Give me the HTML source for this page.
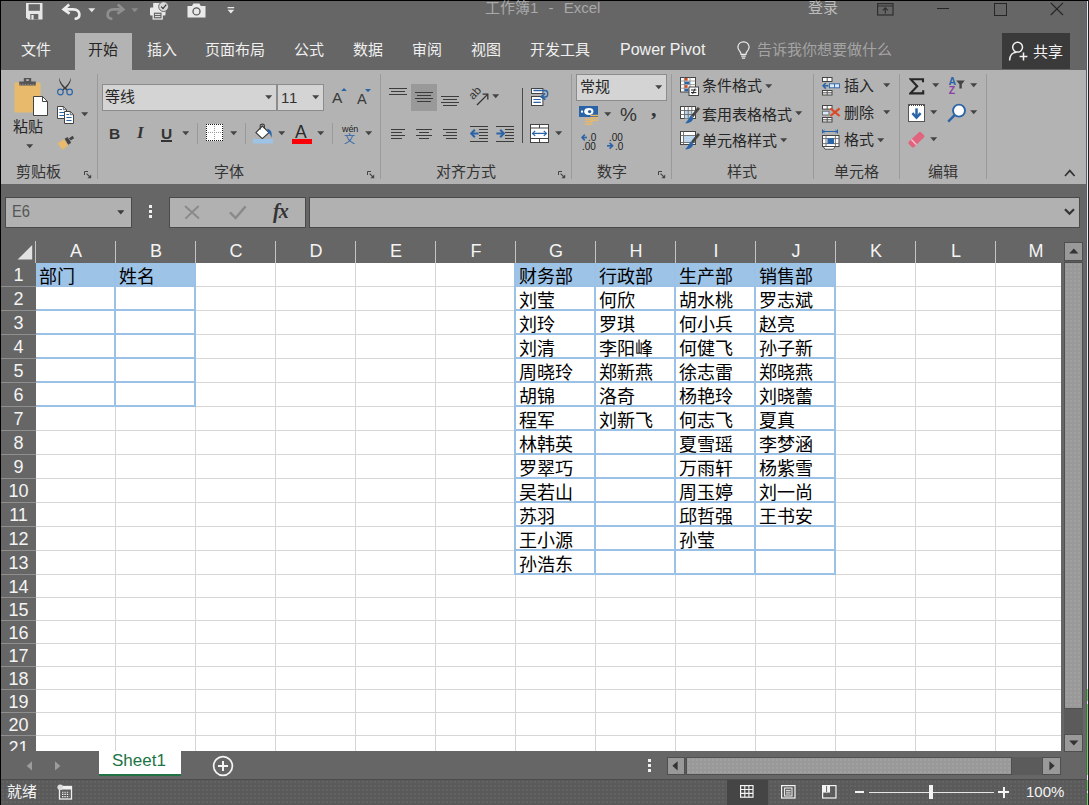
<!DOCTYPE html>
<html lang="zh-CN">
<head>
<meta charset="utf-8">
<title>工作簿1 - Excel</title>
<style>
html,body{margin:0;padding:0;}
body{width:1089px;height:805px;overflow:hidden;background:#666666;font-family:"Liberation Sans",sans-serif;}
#win{position:absolute;left:0;top:0;width:1089px;height:805px;overflow:hidden;background:#666666;}
.abs{position:absolute;}
.t{position:absolute;white-space:nowrap;font-size:15px;line-height:20px;color:#262626;}
.w{color:#f0f0f0;}
/* frame */
#bt{position:absolute;left:0;top:0;width:1089px;height:1px;background:#000;}
#bl{position:absolute;left:0;top:0;width:1px;height:805px;background:#000;}
#br{position:absolute;left:1088px;top:0;width:1px;height:805px;background:#222;}
#br2{position:absolute;left:1087px;top:1px;width:1px;height:804px;background:#e6ebf8;}
#br3{position:absolute;left:1086px;top:1px;width:1px;height:804px;background:#5c5c5c;}
/* ribbon */
#ribbon{position:absolute;left:1px;top:70px;width:1085px;height:114px;background:#b3b3b3;}
.gsep{position:absolute;top:79px;width:1px;height:104px;background:#999999;}
.glabel{position:absolute;top:162px;font-size:15px;line-height:20px;color:#333;white-space:nowrap;}
/* grid */
#grid{position:absolute;left:1px;top:239px;width:1060px;height:512px;overflow:hidden;}
#colhdr{position:absolute;left:0;top:0;width:1060px;height:24px;background:#666666;}
.ch{position:absolute;top:0;width:80px;height:24px;line-height:25px;text-align:center;color:#f4f4f4;font-size:18px;}
.chsep{position:absolute;top:2px;width:1px;height:22px;background:#c4c4c4;}
#sheet{position:absolute;left:35px;top:24px;width:1025px;height:488px;background:#ffffff;overflow:hidden;}
.vl{position:absolute;top:0;width:1px;height:488px;background:#d6d6d6;}
.hl{position:absolute;left:0;height:1px;width:1025px;background:#d6d6d6;}
.cell{position:absolute;box-sizing:border-box;width:82px;height:26px;border:2px solid #9bc2e6;font-size:18px;line-height:24px;padding-left:3px;padding-top:2px;color:#000;white-space:nowrap;overflow:hidden;font-weight:300;}
.cell.hd{background:#9dc3e6;}
#rowhdr{position:absolute;left:0;top:24px;width:35px;height:488px;background:#666666;}
.rh{position:absolute;left:0;width:35px;height:24px;box-sizing:border-box;border-bottom:1px solid #8f8f8f;line-height:25px;font-size:18px;color:#f4f4f4;text-align:center;}
.tab{top:40px;font-size:15px;line-height:20px;}
.box{box-sizing:border-box;background:#d4d4d4;border:1px solid #8c8c8c;}
.fbox{box-sizing:border-box;background:#b1b1b1;border:1px solid #4a4a4a;}
.sbtn{box-sizing:border-box;background:#999999;border:1px solid #4f4f4f;}
.dots{background-image:radial-gradient(circle,#a8a8a8 0.6px,transparent 0.8px);background-size:4px 4px;}
.dots2{background-color:#5a5a5a;background-image:radial-gradient(circle,#6e6e6e 0.6px,transparent 0.8px);background-size:4px 4px;}

</style>
</head>
<body>
<div id="win">
<div id="bt"></div><div id="bl"></div><div id="br3"></div><div id="br2"></div><div id="br"></div>
<!-- quick access toolbar -->
<svg class="abs" style="left:26px;top:3px" width="17" height="17" viewBox="0 0 17 17"><path d="M0 0H16.5V16.5H2.2L0 14.3Z" fill="#e6e6e6"/><rect x="2.6" y="1.2" width="11.3" height="6.6" fill="#666"/><rect x="4.3" y="11" width="8" height="5.5" fill="#666"/><rect x="5.4" y="12" width="2.2" height="4.5" fill="#e6e6e6"/></svg>
<svg class="abs" style="left:61px;top:3px" width="21" height="17" viewBox="0 0 21 17"><path d="M8.2 1.6 L2.6 6.4 L8.6 10.6" fill="none" stroke="#ededed" stroke-width="2.6" stroke-linejoin="miter"/><path d="M3.4 6.4 H12.2 C16.6 6.4 18.4 9 18.4 11.6 C18.4 14.2 16.6 15.8 13.6 15.8" fill="none" stroke="#ededed" stroke-width="2.6"/></svg>
<svg class="abs" style="left:88px;top:8px" width="8" height="5" viewBox="0 0 8 5"><path d="M0.3 0.3H7.3L3.8 4.2Z" fill="#e4e4e4"/></svg>
<svg class="abs" style="left:105px;top:3px" width="21" height="17" viewBox="0 0 21 17"><g transform="translate(21,0) scale(-1,1)"><path d="M8.2 1.6 L2.6 6.4 L8.6 10.6" fill="none" stroke="#8f8f8f" stroke-width="2.6"/><path d="M3.4 6.4 H12.2 C16.6 6.4 18.4 9 18.4 11.6 C18.4 14.2 16.6 15.8 13.6 15.8" fill="none" stroke="#8f8f8f" stroke-width="2.6"/></g></svg>
<svg class="abs" style="left:131px;top:8px" width="8" height="5" viewBox="0 0 8 5"><path d="M0.3 0.3H7.3L3.8 4.2Z" fill="#8a8a8a"/></svg>
<svg class="abs" style="left:149px;top:1px" width="21" height="19" viewBox="0 0 21 19"><rect x="1" y="6.5" width="15.5" height="8" rx="1" fill="#e9e9e9"/><rect x="4.2" y="2" width="8" height="5" fill="#e9e9e9"/><rect x="4.2" y="11" width="9" height="7" fill="#666" stroke="#e9e9e9" stroke-width="1.3"/><path d="M6 13.4H11.4M6 15.6H11.4" stroke="#e9e9e9" stroke-width="1"/><circle cx="14.6" cy="5.6" r="4.9" fill="#d9d9d9" stroke="#666" stroke-width="1"/><path d="M12.2 5.6L14 7.6L17.2 3.6" fill="none" stroke="#3c3c3c" stroke-width="1.3"/></svg>
<svg class="abs" style="left:187px;top:3px" width="19" height="15" viewBox="0 0 19 15"><path d="M0.5 3H5L6.4 0.6H12.4L13.8 3H18.5V14.5H0.5Z" fill="#e9e9e9"/><circle cx="9.5" cy="8.4" r="3.5" fill="#e9e9e9" stroke="#555" stroke-width="1.3"/></svg>
<svg class="abs" style="left:227px;top:7px" width="8" height="7" viewBox="0 0 8 7"><rect x="0.6" y="0" width="6.6" height="1.3" fill="#e9e9e9"/><path d="M0.6 2.8H7.2L3.9 6.4Z" fill="#e9e9e9"/></svg>
<div class="t" style="left:485px;top:-2px;color:#a9a9a9;font-size:15px;word-spacing:6px;">工作簿1 - Excel</div>
<div class="t" style="left:808px;top:-2px;color:#bcbcbc;">登录</div>
<!-- window controls -->
<svg class="abs" style="left:877px;top:3px" width="17" height="13" viewBox="0 0 17 13"><rect x="0.6" y="0.6" width="15.4" height="11.4" fill="none" stroke="#2e2e2e" stroke-width="1.2"/><path d="M0.6 3H16" stroke="#2e2e2e" stroke-width="1"/><path d="M8.3 10.5V5M5.8 7.4L8.3 4.9L10.8 7.4" fill="none" stroke="#2e2e2e" stroke-width="1.1"/></svg>
<div class="abs" style="left:937px;top:8px;width:12px;height:1px;background:#262626"></div>
<div class="abs" style="left:994px;top:3px;width:11px;height:11px;border:1px solid #262626;box-sizing:content-box"></div>
<svg class="abs" style="left:1050px;top:2px" width="14" height="14" viewBox="0 0 14 14"><path d="M0.8 0.8L13 13M13 0.8L0.8 13" stroke="#262626" stroke-width="1.2"/></svg>
<!-- ribbon tabs -->
<div class="abs" style="left:75px;top:33px;width:57px;height:38px;background:#b3b3b3"></div>
<div class="t tab w" style="left:21px">文件</div>
<div class="t tab" style="left:88px;color:#262626">开始</div>
<div class="t tab w" style="left:147px">插入</div>
<div class="t tab w" style="left:205px">页面布局</div>
<div class="t tab w" style="left:294px">公式</div>
<div class="t tab w" style="left:353px">数据</div>
<div class="t tab w" style="left:412px">审阅</div>
<div class="t tab w" style="left:471px">视图</div>
<div class="t tab w" style="left:530px">开发工具</div>
<div class="t tab w" style="left:620px;font-size:16px;">Power Pivot</div>
<svg class="abs" style="left:737px;top:41px" width="13" height="19" viewBox="0 0 13 19"><path d="M6.5 0.8C3.2 0.8 0.9 3.2 0.9 6.2C0.9 8.4 2.2 9.6 3.2 10.8C3.8 11.6 4 12.4 4 13.4H9C9 12.4 9.2 11.6 9.8 10.8C10.8 9.6 12.1 8.4 12.1 6.2C12.1 3.2 9.8 0.8 6.5 0.8Z" fill="none" stroke="#ededed" stroke-width="1.2"/><path d="M4.2 15.2H8.8M4.8 17.2H8.2" stroke="#ededed" stroke-width="1.2"/></svg>
<div class="t tab" style="left:757px;color:#a4a4a4">告诉我你想要做什么</div>
<div class="abs" style="left:1002px;top:33px;width:68px;height:36px;background:#3a3a3a"></div>
<svg class="abs" style="left:1008px;top:41px" width="21" height="21" viewBox="0 0 21 21"><circle cx="9.6" cy="6.2" r="4.9" fill="none" stroke="#f2f2f2" stroke-width="1.5"/><path d="M1.6 19.6C1.6 14.6 4.4 11.4 8.6 11.2" fill="none" stroke="#f2f2f2" stroke-width="1.5"/><path d="M11.6 15.4H19.4M15.5 11.4V19.4" stroke="#f2f2f2" stroke-width="1.5"/></svg>
<div class="t tab" style="left:1033px;color:#f4f4f4;top:42px">共享</div>
<div id="ribbon"></div>
<svg class="abs" style="left:14px;top:77px" width="35" height="40" viewBox="0 0 35 40"><rect x="0.5" y="5.5" width="26" height="30" fill="#e8bb6c"/><path d="M5.2 8.6V4.4H9.8V1H17.2V4.4H21.8V8.6Z" fill="#555"/><path d="M5.6 7.4H21.6" stroke="#8e8e8e" stroke-width="1" stroke-dasharray="1.3 1.3"/><rect x="12.2" y="2.2" width="2.6" height="1.8" fill="#b3b3b3"/><path d="M19.5 19.5H28.5L33.5 24.5V38.5H19.5Z" fill="#fff" stroke="#444" stroke-width="1"/><path d="M28.5 19.5V24.5H33.5" fill="none" stroke="#444" stroke-width="1"/></svg>
<div class="t" style="left:13px;top:117px;">粘贴</div>
<svg class="abs" style="left:26.1px;top:144.0px" width="8" height="5" viewBox="0 0 8 5"><path d="M0.2 0.3H7.2L3.7 4.2Z" fill="#444"/></svg>
<svg class="abs" style="left:56px;top:77px" width="18" height="19" viewBox="0 0 18 19"><path d="M3.2 0.6C3.8 4.4 6.6 8.6 11.8 12.6L10.6 13.4C6.2 10.2 2.6 5.6 3.2 0.6Z" fill="#3c3c3c"/><path d="M14.8 0.6C14.2 4.4 11.4 8.6 6.2 12.6L7.4 13.4C11.8 10.2 15.4 5.6 14.8 0.6Z" fill="#3c3c3c"/><circle cx="4.4" cy="15" r="2.8" fill="none" stroke="#2b64a6" stroke-width="1.2"/><circle cx="13.6" cy="15" r="2.8" fill="none" stroke="#2b64a6" stroke-width="1.2"/></svg>
<svg class="abs" style="left:56px;top:106px" width="19" height="19" viewBox="0 0 19 19"><path d="M1.5 0.5H7.3L10.5 3.7V12.5H1.5Z" fill="#fff" stroke="#444" stroke-width="1"/><path d="M7.3 0.5V3.7H10.5" fill="none" stroke="#444" stroke-width="0.8"/><path d="M3.4 3.5H6M3.4 6.5H8.4M3.4 9.5H8.4" stroke="#2b64a6" stroke-width="1"/><path d="M8.5 5.5H14.3L17.5 8.7V17.5H8.5Z" fill="#fff" stroke="#444" stroke-width="1"/><path d="M14.3 5.5V8.7H17.5" fill="none" stroke="#444" stroke-width="0.8"/><path d="M10.4 8.5H13M10.4 11.5H15.6M10.4 14.5H15.6" stroke="#2b64a6" stroke-width="1"/></svg>
<svg class="abs" style="left:81.1px;top:112.0px" width="8" height="5" viewBox="0 0 8 5"><path d="M0.2 0.3H7.2L3.7 4.2Z" fill="#444"/></svg>
<svg class="abs" style="left:57px;top:135px" width="18" height="16" viewBox="0 0 18 16"><path d="M0.5 8.2L7.2 4.2L11 10.4L5.6 14.8Z" fill="#e8bb6c"/><path d="M7.6 3.8L10.6 2L14.2 7.8L11.2 9.8Z" fill="#444"/><path d="M12 3.2L15.6 0.8L17.2 3.2L13.6 5.6Z" fill="#444"/></svg>
<div class="glabel" style="left:16px">剪贴板</div>
<svg class="abs" style="left:84px;top:171px" width="8" height="8" viewBox="0 0 8 8"><path d="M0.5 4V0.5H4" fill="none" stroke="#444" stroke-width="1"/><path d="M2.6 2.6L6.6 6.6" stroke="#444" stroke-width="1.1"/><path d="M7.2 3.4V7.2H3.4Z" fill="#444"/></svg>
<div class="abs" style="left:97px;top:74px;width:1px;height:105px;background:#9a9a9a"></div>
<div class="abs box" style="left:102px;top:84px;width:175px;height:27px"></div>
<div class="t" style="left:105px;top:87px;">等线</div>
<svg class="abs" style="left:265.3px;top:94.6px" width="8" height="5" viewBox="0 0 8 5"><path d="M0.2 0.3H7.2L3.7 4.2Z" fill="#444"/></svg>
<div class="abs box" style="left:277px;top:84px;width:47px;height:27px"></div>
<div class="t" style="left:281px;top:88px;font-size:15px;letter-spacing:0.8px;color:#333">11</div>
<svg class="abs" style="left:312.3px;top:94.6px" width="8" height="5" viewBox="0 0 8 5"><path d="M0.2 0.3H7.2L3.7 4.2Z" fill="#444"/></svg>
<div class="t" style="left:332px;top:88px;font-size:15.5px;line-height:20px;color:#3a3a3a">A</div>
<svg class="abs" style="left:340.5px;top:88px" width="6" height="3.2" viewBox="0 0 6 3.2"><path d="M0 3.2H6L3 0Z" fill="#2b64a6"/></svg>
<div class="t" style="left:357px;top:89px;font-size:14.5px;line-height:20px;color:#3a3a3a">A</div>
<svg class="abs" style="left:365.3px;top:89px" width="6" height="3.2" viewBox="0 0 6 3.2"><path d="M0 0H6L3 3.2Z" fill="#2b64a6"/></svg>
<div class="t" style="left:109px;top:124px;font-weight:bold;font-size:15.5px;color:#333">B</div>
<div class="t" style="left:137px;top:123px;font-weight:bold;font-style:italic;font-size:17px;color:#333;font-family:'Liberation Serif',serif">I</div>
<div class="t" style="left:161px;top:124px;font-size:15.5px;font-weight:bold;color:#333">U</div>
<div class="abs" style="left:161px;top:140px;width:11px;height:1.5px;background:#333"></div>
<svg class="abs" style="left:182.2px;top:131.1px" width="8" height="5" viewBox="0 0 8 5"><path d="M0.2 0.3H7.2L3.7 4.2Z" fill="#444"/></svg>
<div class="abs" style="left:197px;top:123px;width:1px;height:21px;background:#9a9a9a"></div>
<svg class="abs" style="left:206px;top:124px" width="18" height="18" viewBox="0 0 18 18"><g shape-rendering="crispEdges"><rect x="0" y="0" width="17" height="17" fill="#fff"/><path d="M0 8.5H17M8.5 0V17" fill="none" stroke="#9a9a9a" stroke-width="1" stroke-dasharray="1 1"/><path d="M0 0.5H17M0 16.5H17M0.5 0V17M16.5 0V17" fill="none" stroke="#1a1a1a" stroke-width="1" stroke-dasharray="1 1"/></g></svg>
<svg class="abs" style="left:230.0px;top:131.1px" width="8" height="5" viewBox="0 0 8 5"><path d="M0.2 0.3H7.2L3.7 4.2Z" fill="#444"/></svg>
<div class="abs" style="left:245px;top:123px;width:1px;height:21px;background:#9a9a9a"></div>
<svg class="abs" style="left:253px;top:123px" width="21" height="21" viewBox="0 0 21 21"><path d="M2.9 9.6L9.3 3L16 9.6L9.3 15.6Z" fill="#fff" stroke="#3c3c3c" stroke-width="1.2" stroke-linejoin="round"/><path d="M7.2 6.4V2.6C7.2 0.6 11.4 0.6 11.4 2.6V5.2" fill="none" stroke="#3c3c3c" stroke-width="1.1"/><path d="M14.2 5.8C17.8 6.4 19.4 9.4 18.6 14.8C17.8 12 16.8 10.8 15 9.6Z" fill="#2b64a6"/><rect x="0" y="16" width="20" height="4.5" fill="#9dc3e6"/></svg>
<svg class="abs" style="left:278.1px;top:131.1px" width="8" height="5" viewBox="0 0 8 5"><path d="M0.2 0.3H7.2L3.7 4.2Z" fill="#444"/></svg>
<div class="t" style="left:295px;top:122px;font-size:17.5px;color:#2b2b2b;">A</div>
<div class="abs" style="left:292px;top:139px;width:20px;height:5px;background:#fb0007"></div>
<svg class="abs" style="left:317.1px;top:131.1px" width="8" height="5" viewBox="0 0 8 5"><path d="M0.2 0.3H7.2L3.7 4.2Z" fill="#444"/></svg>
<div class="abs" style="left:332px;top:123px;width:1px;height:21px;background:#9a9a9a"></div>
<div class="t" style="left:342px;top:123px;font-size:9px;line-height:12px;color:#222;letter-spacing:-0.1px">wén</div>
<div class="t" style="left:344px;top:133px;font-size:11px;line-height:13px;color:#2b64a6">文</div>
<svg class="abs" style="left:365.3px;top:131.1px" width="8" height="5" viewBox="0 0 8 5"><path d="M0.2 0.3H7.2L3.7 4.2Z" fill="#444"/></svg>
<div class="glabel" style="left:214px">字体</div>
<svg class="abs" style="left:367px;top:171px" width="8" height="8" viewBox="0 0 8 8"><path d="M0.5 4V0.5H4" fill="none" stroke="#444" stroke-width="1"/><path d="M2.6 2.6L6.6 6.6" stroke="#444" stroke-width="1.1"/><path d="M7.2 3.4V7.2H3.4Z" fill="#444"/></svg>
<div class="abs" style="left:380px;top:74px;width:1px;height:105px;background:#9a9a9a"></div>
<div class="abs" style="left:389px;top:88px;width:18px;height:1px;background:#3c3c3c"></div>
<div class="abs" style="left:391px;top:91px;width:14px;height:1px;background:#3c3c3c"></div>
<div class="abs" style="left:389px;top:94px;width:18px;height:1px;background:#3c3c3c"></div>
<div class="abs" style="left:411px;top:84px;width:26px;height:27px;background:#999"></div>
<div class="abs" style="left:415px;top:92px;width:18px;height:1px;background:#3c3c3c"></div>
<div class="abs" style="left:417px;top:95px;width:14px;height:1px;background:#3c3c3c"></div>
<div class="abs" style="left:415px;top:98px;width:18px;height:1px;background:#3c3c3c"></div>
<div class="abs" style="left:417px;top:101px;width:14px;height:1px;background:#3c3c3c"></div>
<div class="abs" style="left:441px;top:96px;width:18px;height:1px;background:#3c3c3c"></div>
<div class="abs" style="left:443px;top:99px;width:14px;height:1px;background:#3c3c3c"></div>
<div class="abs" style="left:441px;top:102px;width:18px;height:1px;background:#3c3c3c"></div>
<div class="abs" style="left:443px;top:105px;width:14px;height:1px;background:#3c3c3c"></div>
<svg class="abs" style="left:468px;top:86px" width="22" height="21" viewBox="0 0 22 21"><text x="0" y="0" transform="translate(5.2,14.2) rotate(-47)" font-family="Liberation Sans" font-size="11.5" fill="#333">ab</text><path d="M9 19L19.6 8.4" stroke="#333" stroke-width="1.3"/><path d="M14.6 8.2H19.8V13.4" fill="none" stroke="#333" stroke-width="1.3"/></svg>
<svg class="abs" style="left:492.3px;top:94.4px" width="8" height="5" viewBox="0 0 8 5"><path d="M0.2 0.3H7.2L3.7 4.2Z" fill="#444"/></svg>
<div class="abs" style="left:522px;top:88px;width:1px;height:55px;background:#4a4a4a"></div>
<svg class="abs" style="left:531px;top:88px" width="18" height="18" viewBox="0 0 18 18"><rect x="0.5" y="0.5" width="11.4" height="5" fill="#fff" stroke="#444"/><rect x="0.5" y="8.5" width="11.4" height="9" fill="#fff" stroke="#444"/><path d="M2.4 11.5H9.8M2.4 14.4H9.8" stroke="#2b64a6" stroke-width="1.1"/><path d="M2.4 2.5H14.2C17.6 2.5 17.6 9 14.2 9H12" fill="none" stroke="#2b64a6" stroke-width="1.3"/><path d="M14 5.4L10.2 8.8L14.4 11.6" fill="none" stroke="#2b64a6" stroke-width="1.7"/></svg>
<svg class="abs" style="left:530px;top:124px" width="20" height="19" viewBox="0 0 20 19"><rect x="0.5" y="0.5" width="18" height="18" fill="#fff" stroke="#444"/><path d="M0.5 4H18.5M0.5 14.5H18.5M9.5 0.5V4M9.5 14.5V18.5" stroke="#444" stroke-width="1"/><path d="M3 9.4H16" stroke="#2b64a6" stroke-width="1.3"/><path d="M5.2 6.9L2.6 9.4L5.2 11.9M13.8 6.9L16.4 9.4L13.8 11.9" fill="none" stroke="#2b64a6" stroke-width="1.3"/></svg>
<svg class="abs" style="left:555.3px;top:131.1px" width="8" height="5" viewBox="0 0 8 5"><path d="M0.2 0.3H7.2L3.7 4.2Z" fill="#444"/></svg>
<div class="abs" style="left:391px;top:129px;width:14px;height:1px;background:#3c3c3c"></div>
<div class="abs" style="left:391px;top:132px;width:11px;height:1px;background:#3c3c3c"></div>
<div class="abs" style="left:391px;top:135px;width:14px;height:1px;background:#3c3c3c"></div>
<div class="abs" style="left:391px;top:138px;width:11px;height:1px;background:#3c3c3c"></div>
<div class="abs" style="left:416px;top:129px;width:16px;height:1px;background:#3c3c3c"></div>
<div class="abs" style="left:419px;top:132px;width:10px;height:1px;background:#3c3c3c"></div>
<div class="abs" style="left:416px;top:135px;width:16px;height:1px;background:#3c3c3c"></div>
<div class="abs" style="left:419px;top:138px;width:10px;height:1px;background:#3c3c3c"></div>
<div class="abs" style="left:443px;top:129px;width:14px;height:1px;background:#3c3c3c"></div>
<div class="abs" style="left:446px;top:132px;width:11px;height:1px;background:#3c3c3c"></div>
<div class="abs" style="left:443px;top:135px;width:14px;height:1px;background:#3c3c3c"></div>
<div class="abs" style="left:446px;top:138px;width:11px;height:1px;background:#3c3c3c"></div>
<div class="abs" style="left:470px;top:126px;width:18px;height:1px;background:#3c3c3c"></div>
<div class="abs" style="left:470px;top:141px;width:18px;height:1px;background:#3c3c3c"></div>
<div class="abs" style="left:479px;top:129px;width:9px;height:1px;background:#3c3c3c"></div>
<div class="abs" style="left:479px;top:132px;width:9px;height:1px;background:#3c3c3c"></div>
<div class="abs" style="left:479px;top:135px;width:9px;height:1px;background:#3c3c3c"></div>
<div class="abs" style="left:479px;top:138px;width:9px;height:1px;background:#3c3c3c"></div>
<svg class="abs" style="left:469.5px;top:129px" width="9" height="9" viewBox="0 0 9 9"><path d="M1.4 4.5H8.6" stroke="#2b64a6" stroke-width="2"/><path d="M4.8 0.8L1.2 4.5L4.8 8.2" fill="none" stroke="#2b64a6" stroke-width="2"/></svg>
<div class="abs" style="left:496px;top:126px;width:18px;height:1px;background:#3c3c3c"></div>
<div class="abs" style="left:496px;top:141px;width:18px;height:1px;background:#3c3c3c"></div>
<div class="abs" style="left:505px;top:129px;width:9px;height:1px;background:#3c3c3c"></div>
<div class="abs" style="left:505px;top:132px;width:9px;height:1px;background:#3c3c3c"></div>
<div class="abs" style="left:505px;top:135px;width:9px;height:1px;background:#3c3c3c"></div>
<div class="abs" style="left:505px;top:138px;width:9px;height:1px;background:#3c3c3c"></div>
<svg class="abs" style="left:495.5px;top:129px" width="9" height="9" viewBox="0 0 9 9"><path d="M0.4 4.5H7.6" stroke="#2b64a6" stroke-width="2"/><path d="M4.2 0.8L7.8 4.5L4.2 8.2" fill="none" stroke="#2b64a6" stroke-width="2"/></svg>
<div class="glabel" style="left:436px">对齐方式</div>
<svg class="abs" style="left:558px;top:171px" width="8" height="8" viewBox="0 0 8 8"><path d="M0.5 4V0.5H4" fill="none" stroke="#444" stroke-width="1"/><path d="M2.6 2.6L6.6 6.6" stroke="#444" stroke-width="1.1"/><path d="M7.2 3.4V7.2H3.4Z" fill="#444"/></svg>
<div class="abs" style="left:571px;top:74px;width:1px;height:105px;background:#9a9a9a"></div>
<div class="abs box" style="left:576px;top:74px;width:91px;height:27px"></div>
<div class="t" style="left:580px;top:77px;">常规</div>
<svg class="abs" style="left:655.3px;top:84.6px" width="8" height="5" viewBox="0 0 8 5"><path d="M0.2 0.3H7.2L3.7 4.2Z" fill="#444"/></svg>
<svg class="abs" style="left:579px;top:106px" width="20" height="20" viewBox="0 0 20 20"><rect x="0" y="0" width="19" height="11" fill="#2b64a6"/><ellipse cx="9.8" cy="5.5" rx="4.6" ry="3.4" fill="#fff"/><circle cx="10.6" cy="5.6" r="1.7" fill="#2b64a6"/><rect x="2" y="4.6" width="2" height="2" fill="#fff"/><g stroke="#e8b86a" stroke-width="1.5"><path d="M11.4 9.4H19.4M11.4 11.8H19.4M11.4 14.2H19.4M6.2 13.4H13.6M6.2 15.8H13.6M6.2 18.2H13.6"/></g></svg>
<svg class="abs" style="left:604.3px;top:112.0px" width="8" height="5" viewBox="0 0 8 5"><path d="M0.2 0.3H7.2L3.7 4.2Z" fill="#444"/></svg>
<div class="t" style="left:620px;top:104px;font-size:19px;line-height:22px;color:#333">%</div>
<div class="t" style="left:651px;top:98px;font-size:22px;line-height:22px;color:#333;font-weight:bold;font-family:'Liberation Serif',serif">,</div>
<svg class="abs" style="left:581px;top:133px" width="17" height="17" viewBox="0 0 17 17"><path d="M1 4.5H6" stroke="#2b64a6" stroke-width="1.6"/><path d="M3.8 1.6L1 4.5L3.8 7.4" fill="none" stroke="#2b64a6" stroke-width="1.6"/><text x="7" y="8" font-family="Liberation Sans" font-size="10" fill="#222">.0</text><text x="1" y="16.5" font-family="Liberation Sans" font-size="10" fill="#222">.00</text></svg>
<svg class="abs" style="left:606px;top:133px" width="18" height="17" viewBox="0 0 18 17"><text x="3" y="8" font-family="Liberation Sans" font-size="10" fill="#222">.00</text><path d="M1 12.8H6.5" stroke="#2b64a6" stroke-width="1.6"/><path d="M3.6 9.9L6.6 12.8L3.6 15.7" fill="none" stroke="#2b64a6" stroke-width="1.6"/><text x="9" y="16.5" font-family="Liberation Sans" font-size="10" fill="#222">.0</text></svg>
<div class="glabel" style="left:597px">数字</div>
<svg class="abs" style="left:658px;top:171px" width="8" height="8" viewBox="0 0 8 8"><path d="M0.5 4V0.5H4" fill="none" stroke="#444" stroke-width="1"/><path d="M2.6 2.6L6.6 6.6" stroke="#444" stroke-width="1.1"/><path d="M7.2 3.4V7.2H3.4Z" fill="#444"/></svg>
<div class="abs" style="left:671px;top:74px;width:1px;height:105px;background:#9a9a9a"></div>
<svg class="abs" style="left:680px;top:77px" width="19" height="19" viewBox="0 0 19 19"><rect x="0.5" y="0.5" width="15" height="14.5" fill="#fff" stroke="#444"/><path d="M0.5 4H15.5M0.5 7.6H15.5M0.5 11.2H15.5M4.4 0.5V15M10 0.5V15" stroke="#888" stroke-width="0.8"/><rect x="4.6" y="1" width="3" height="2.6" fill="#d04a1e"/><rect x="4.6" y="4.6" width="5" height="2.6" fill="#2b64a6"/><rect x="4.6" y="8.2" width="3" height="2.6" fill="#d04a1e"/><rect x="4.6" y="11.8" width="4" height="2.6" fill="#2b64a6"/><rect x="9" y="10" width="9.5" height="8.5" fill="#fff" stroke="#444"/><path d="M11 13H16.4M11 15.6H16.4M15 11.6L12.6 17" stroke="#222" stroke-width="1"/></svg>
<div class="t" style="left:702px;top:76px;">条件格式</div>
<svg class="abs" style="left:764.6px;top:84.2px" width="8" height="5" viewBox="0 0 8 5"><path d="M0.2 0.3H7.2L3.7 4.2Z" fill="#444"/></svg>
<svg class="abs" style="left:680px;top:106px" width="20" height="18" viewBox="0 0 20 18"><rect x="0.5" y="0.5" width="15" height="12" fill="#fff" stroke="#444"/><rect x="4.5" y="4.5" width="7" height="8" fill="#bdd7ee"/><path d="M0.5 4.5H15.5M0.5 8.5H15.5M4.5 0.5V12.5M8.2 0.5V12.5M11.8 0.5V12.5" stroke="#666" stroke-width="0.9"/><path d="M18.9 1.8L12.2 10.4" stroke="#444" stroke-width="2.8"/><path d="M10.6 9.6L13.4 11.8C13 15.2 9.4 17.8 5.2 17.2C7.6 15.4 8.6 12.6 10.6 9.6Z" fill="#2b64a6"/></svg>
<div class="t" style="left:702px;top:105px;">套用表格格式</div>
<svg class="abs" style="left:795.2px;top:111.2px" width="8" height="5" viewBox="0 0 8 5"><path d="M0.2 0.3H7.2L3.7 4.2Z" fill="#444"/></svg>
<svg class="abs" style="left:680px;top:131px" width="20" height="19" viewBox="0 0 20 19"><rect x="0.5" y="0.5" width="15" height="13" fill="#fff" stroke="#444"/><rect x="3.5" y="5" width="11" height="6" fill="#bdd7ee"/><path d="M0.5 4.5H15.5M0.5 11.5H15.5M3.5 0.5V13.5" stroke="#666" stroke-width="0.9"/><path d="M18.9 2.8L12.2 11.4" stroke="#444" stroke-width="2.8"/><path d="M10.6 10.6L13.4 12.8C13 16.2 9.4 18.8 5.2 18.2C7.6 16.4 8.6 13.6 10.6 10.6Z" fill="#2b64a6"/></svg>
<div class="t" style="left:702px;top:131px;">单元格样式</div>
<svg class="abs" style="left:780.2px;top:138.0px" width="8" height="5" viewBox="0 0 8 5"><path d="M0.2 0.3H7.2L3.7 4.2Z" fill="#444"/></svg>
<div class="glabel" style="left:727px">样式</div>
<div class="abs" style="left:813px;top:74px;width:1px;height:105px;background:#9a9a9a"></div>
<svg class="abs" style="left:822px;top:77px" width="19" height="19" viewBox="0 0 19 19"><rect x="0.5" y="0.5" width="9.5" height="4" fill="#fff" stroke="#444"/><rect x="0.5" y="13.5" width="9.5" height="4.5" fill="#fff" stroke="#444"/><path d="M5.2 0.5V4.5M5.2 13.5V18M0.5 15.8H10" stroke="#444" stroke-width="0.9"/><rect x="7.5" y="6.8" width="10" height="4" fill="#dce9f6" stroke="#2b64a6" stroke-width="0.9"/><path d="M12.5 6.8V10.8" stroke="#2b64a6" stroke-width="0.9"/><path d="M1 8.8H6.5" stroke="#2b64a6" stroke-width="1.5"/><path d="M3.8 6L1 8.8L3.8 11.6" fill="none" stroke="#2b64a6" stroke-width="1.5"/></svg>
<div class="t" style="left:844px;top:76px;">插入</div>
<svg class="abs" style="left:883.0px;top:83.0px" width="8" height="5" viewBox="0 0 8 5"><path d="M0.2 0.3H7.2L3.7 4.2Z" fill="#444"/></svg>
<svg class="abs" style="left:822px;top:105px" width="20" height="18" viewBox="0 0 20 18"><rect x="0.5" y="0.5" width="9.5" height="3.6" fill="#fff" stroke="#444"/><rect x="0.5" y="12.5" width="9.5" height="4.5" fill="#fff" stroke="#444"/><path d="M5.2 0.5V4M5.2 12.5V17M0.5 14.8H10" stroke="#444" stroke-width="0.9"/><rect x="0.5" y="6.2" width="6.5" height="3.8" fill="#dce9f6" stroke="#666" stroke-width="0.9"/><path d="M8.4 3.4L17.6 11M17.6 3.4L8.4 11" stroke="#d84a27" stroke-width="2.2"/></svg>
<div class="t" style="left:844px;top:103px;">删除</div>
<svg class="abs" style="left:883.0px;top:110.2px" width="8" height="5" viewBox="0 0 8 5"><path d="M0.2 0.3H7.2L3.7 4.2Z" fill="#444"/></svg>
<svg class="abs" style="left:822px;top:129px" width="19" height="21" viewBox="0 0 19 21"><path d="M0.5 2.5H15.5M0.5 0.5V4.5M15.5 0.5V4.5" stroke="#2b64a6" stroke-width="1" fill="none"/><path d="M2.6 1L0.8 2.5L2.6 4M13.4 1L15.2 2.5L13.4 4" fill="none" stroke="#2b64a6" stroke-width="0.9"/><rect x="0.5" y="6.5" width="16.5" height="11" fill="#fff" stroke="#444"/><path d="M0.5 9.6H17M0.5 14.6H17M4 6.5V17.5M13.4 6.5V17.5" stroke="#666" stroke-width="0.9"/><rect x="5.4" y="9.2" width="6.6" height="5.8" fill="#2b64a6"/><path d="M1.5 18L3 20.2H11.4L13 18" fill="#fff" stroke="#444" stroke-width="0.9"/></svg>
<div class="t" style="left:844px;top:130px;">格式</div>
<svg class="abs" style="left:877.1px;top:138.0px" width="8" height="5" viewBox="0 0 8 5"><path d="M0.2 0.3H7.2L3.7 4.2Z" fill="#444"/></svg>
<div class="glabel" style="left:834px">单元格</div>
<div class="abs" style="left:899px;top:74px;width:1px;height:105px;background:#9a9a9a"></div>
<svg class="abs" style="left:909px;top:77.5px" width="16" height="17" viewBox="0 0 16 17"><path d="M14 4.2V1.2H1.6L8.2 8.2L1.4 15.4H14.2V12.2" fill="none" stroke="#262626" stroke-width="2.1" stroke-linejoin="miter"/></svg>
<svg class="abs" style="left:932.1px;top:83.2px" width="8" height="5" viewBox="0 0 8 5"><path d="M0.2 0.3H7.2L3.7 4.2Z" fill="#444"/></svg>
<svg class="abs" style="left:948px;top:77px" width="18" height="17" viewBox="0 0 18 17"><text x="0.5" y="8" font-family="Liberation Sans" font-size="10.5" font-weight="bold" fill="#2b64a6">A</text><text x="0.8" y="16.8" font-family="Liberation Sans" font-size="10.5" font-weight="bold" fill="#8a3fa6">Z</text><path d="M8.2 3.4H16.8L13.8 7.2V11.6H11.4V7.2Z" fill="#444"/></svg>
<svg class="abs" style="left:970.1px;top:83.2px" width="8" height="5" viewBox="0 0 8 5"><path d="M0.2 0.3H7.2L3.7 4.2Z" fill="#444"/></svg>
<svg class="abs" style="left:908px;top:104px" width="18" height="18" viewBox="0 0 18 18"><rect x="0.5" y="0.5" width="16" height="17" fill="#fff" stroke="#555"/><path d="M1 1.4H16" stroke="#444" stroke-width="1.2" stroke-dasharray="1 1"/><path d="M8.5 4.4V13.2" stroke="#2b64a6" stroke-width="2.5"/><path d="M4.4 9.2L8.5 13.6L12.6 9.2" fill="none" stroke="#2b64a6" stroke-width="2.5"/></svg>
<svg class="abs" style="left:930.3px;top:110.2px" width="8" height="5" viewBox="0 0 8 5"><path d="M0.2 0.3H7.2L3.7 4.2Z" fill="#444"/></svg>
<svg class="abs" style="left:947px;top:103px" width="20" height="20" viewBox="0 0 20 20"><circle cx="12" cy="7.6" r="6" fill="#fff" stroke="#2b64a6" stroke-width="1.9"/><path d="M7.6 12.2L1.2 18.6" stroke="#2b64a6" stroke-width="2.4"/></svg>
<svg class="abs" style="left:970.1px;top:110.2px" width="8" height="5" viewBox="0 0 8 5"><path d="M0.2 0.3H7.2L3.7 4.2Z" fill="#444"/></svg>
<svg class="abs" style="left:908px;top:131px" width="18" height="18" viewBox="0 0 18 18"><path d="M1 10.6L10.6 1.4C11.4 0.6 12.4 0.6 13.2 1.4L15.8 4C16.6 4.8 16.6 5.8 15.8 6.6L6.2 16C5.4 16.8 4.6 16.8 3.8 16L1 13.2C0.2 12.4 0.2 11.4 1 10.6Z" fill="#e1647f"/><path d="M3.4 8.6L8.4 13.8" stroke="#f5c3cf" stroke-width="1.4"/></svg>
<svg class="abs" style="left:930.3px;top:137.4px" width="8" height="5" viewBox="0 0 8 5"><path d="M0.2 0.3H7.2L3.7 4.2Z" fill="#444"/></svg>
<div class="glabel" style="left:928px">编辑</div>
<div class="abs" style="left:986px;top:74px;width:1px;height:105px;background:#9a9a9a"></div>
<svg class="abs" style="left:1064px;top:169px" width="12" height="8" viewBox="0 0 12 8"><path d="M1 7L5.8 1.6L10.6 7" fill="none" stroke="#333" stroke-width="1.7"/></svg>
<!-- formula bar -->
<div class="abs fbox" style="left:5px;top:197px;width:127px;height:31px"></div>
<div class="t" style="left:12px;top:201px;font-size:17px;line-height:22px;color:#555;transform:scaleX(0.86);transform-origin:0 50%">E6</div>
<svg class="abs" style="left:116.5px;top:210px" width="8" height="5" viewBox="0 0 8 5"><path d="M0.2 0.3H7.4L3.8 4.4Z" fill="#3c3c3c"/></svg>
<div class="abs" style="left:149px;top:205px;width:3px;height:3px;background:#f0f0f0"></div>
<div class="abs" style="left:149px;top:210px;width:3px;height:3px;background:#f0f0f0"></div>
<div class="abs" style="left:149px;top:215px;width:3px;height:3px;background:#f0f0f0"></div>
<div class="abs fbox" style="left:169px;top:197px;width:137px;height:31px"></div>
<svg class="abs" style="left:184px;top:205px" width="16" height="15" viewBox="0 0 16 15"><path d="M1 1L15 13.6M14.6 1L1.4 13.6" stroke="#8a8a8a" stroke-width="2" fill="none"/></svg>
<svg class="abs" style="left:229px;top:205px" width="18" height="15" viewBox="0 0 18 15"><path d="M1 7.4L6.6 13L16.6 1.4" stroke="#8a8a8a" stroke-width="2.4" fill="none"/></svg>
<div class="t" style="left:273px;top:199px;font-family:'Liberation Serif',serif;font-style:italic;font-weight:bold;font-size:20px;line-height:24px;color:#333;letter-spacing:-1px">fx</div>
<div class="abs fbox" style="left:309px;top:197px;width:771px;height:31px"></div>
<svg class="abs" style="left:1064px;top:208px" width="11" height="8" viewBox="0 0 11 8"><path d="M1 1.2L5.5 5.8L10 1.2" stroke="#333" stroke-width="2.2" fill="none"/></svg>
<div id="grid">
<div id="colhdr">
<svg class="abs" style="left:16px;top:5px" width="18" height="18" viewBox="0 0 18 18"><path d="M15.2 1 V15.6 H0.6 Z" fill="#e2e2e2"/></svg>
<div class="ch" style="left:35px">A</div>
<div class="chsep" style="left:34px"></div>
<div class="ch" style="left:115px">B</div>
<div class="chsep" style="left:114px"></div>
<div class="ch" style="left:195px">C</div>
<div class="chsep" style="left:194px"></div>
<div class="ch" style="left:275px">D</div>
<div class="chsep" style="left:274px"></div>
<div class="ch" style="left:355px">E</div>
<div class="chsep" style="left:354px"></div>
<div class="ch" style="left:435px">F</div>
<div class="chsep" style="left:434px"></div>
<div class="ch" style="left:515px">G</div>
<div class="chsep" style="left:514px"></div>
<div class="ch" style="left:595px">H</div>
<div class="chsep" style="left:594px"></div>
<div class="ch" style="left:675px">I</div>
<div class="chsep" style="left:674px"></div>
<div class="ch" style="left:755px">J</div>
<div class="chsep" style="left:754px"></div>
<div class="ch" style="left:835px">K</div>
<div class="chsep" style="left:834px"></div>
<div class="ch" style="left:915px">L</div>
<div class="chsep" style="left:914px"></div>
<div class="ch" style="left:995px">M</div>
<div class="chsep" style="left:994px"></div>
</div>
<div id="sheet">
<div class="vl" style="left:79px"></div>
<div class="vl" style="left:159px"></div>
<div class="vl" style="left:239px"></div>
<div class="vl" style="left:319px"></div>
<div class="vl" style="left:399px"></div>
<div class="vl" style="left:479px"></div>
<div class="vl" style="left:559px"></div>
<div class="vl" style="left:639px"></div>
<div class="vl" style="left:719px"></div>
<div class="vl" style="left:799px"></div>
<div class="vl" style="left:879px"></div>
<div class="vl" style="left:959px"></div>
<div class="vl" style="left:1039px"></div>
<div class="hl" style="top:23px"></div>
<div class="hl" style="top:47px"></div>
<div class="hl" style="top:71px"></div>
<div class="hl" style="top:95px"></div>
<div class="hl" style="top:119px"></div>
<div class="hl" style="top:143px"></div>
<div class="hl" style="top:167px"></div>
<div class="hl" style="top:191px"></div>
<div class="hl" style="top:215px"></div>
<div class="hl" style="top:239px"></div>
<div class="hl" style="top:263px"></div>
<div class="hl" style="top:287px"></div>
<div class="hl" style="top:311px"></div>
<div class="hl" style="top:334px"></div>
<div class="hl" style="top:357px"></div>
<div class="hl" style="top:380px"></div>
<div class="hl" style="top:403px"></div>
<div class="hl" style="top:426px"></div>
<div class="hl" style="top:449px"></div>
<div class="hl" style="top:472px"></div>
<div class="hl" style="top:495px"></div>
<div class="hl" style="top:518px"></div>
<div class="cell hd" style="left:-2px;top:-2px">部门</div>
<div class="cell hd" style="left:78px;top:-2px">姓名</div>
<div class="cell" style="left:-2px;top:22px"></div>
<div class="cell" style="left:78px;top:22px"></div>
<div class="cell" style="left:-2px;top:46px"></div>
<div class="cell" style="left:78px;top:46px"></div>
<div class="cell" style="left:-2px;top:70px"></div>
<div class="cell" style="left:78px;top:70px"></div>
<div class="cell" style="left:-2px;top:94px"></div>
<div class="cell" style="left:78px;top:94px"></div>
<div class="cell" style="left:-2px;top:118px"></div>
<div class="cell" style="left:78px;top:118px"></div>
<div class="cell hd" style="left:478px;top:-2px">财务部</div>
<div class="cell hd" style="left:558px;top:-2px">行政部</div>
<div class="cell hd" style="left:638px;top:-2px">生产部</div>
<div class="cell hd" style="left:718px;top:-2px">销售部</div>
<div class="cell" style="left:478px;top:22px">刘莹</div>
<div class="cell" style="left:558px;top:22px">何欣</div>
<div class="cell" style="left:638px;top:22px">胡水桃</div>
<div class="cell" style="left:718px;top:22px">罗志斌</div>
<div class="cell" style="left:478px;top:46px">刘玲</div>
<div class="cell" style="left:558px;top:46px">罗琪</div>
<div class="cell" style="left:638px;top:46px">何小兵</div>
<div class="cell" style="left:718px;top:46px">赵亮</div>
<div class="cell" style="left:478px;top:70px">刘清</div>
<div class="cell" style="left:558px;top:70px">李阳峰</div>
<div class="cell" style="left:638px;top:70px">何健飞</div>
<div class="cell" style="left:718px;top:70px">孙子新</div>
<div class="cell" style="left:478px;top:94px">周晓玲</div>
<div class="cell" style="left:558px;top:94px">郑新燕</div>
<div class="cell" style="left:638px;top:94px">徐志雷</div>
<div class="cell" style="left:718px;top:94px">郑晓燕</div>
<div class="cell" style="left:478px;top:118px">胡锦</div>
<div class="cell" style="left:558px;top:118px">洛奇</div>
<div class="cell" style="left:638px;top:118px">杨艳玲</div>
<div class="cell" style="left:718px;top:118px">刘晓蕾</div>
<div class="cell" style="left:478px;top:142px">程军</div>
<div class="cell" style="left:558px;top:142px">刘新飞</div>
<div class="cell" style="left:638px;top:142px">何志飞</div>
<div class="cell" style="left:718px;top:142px">夏真</div>
<div class="cell" style="left:478px;top:166px">林韩英</div>
<div class="cell" style="left:558px;top:166px"></div>
<div class="cell" style="left:638px;top:166px">夏雪瑶</div>
<div class="cell" style="left:718px;top:166px">李梦涵</div>
<div class="cell" style="left:478px;top:190px">罗翠巧</div>
<div class="cell" style="left:558px;top:190px"></div>
<div class="cell" style="left:638px;top:190px">万雨轩</div>
<div class="cell" style="left:718px;top:190px">杨紫雪</div>
<div class="cell" style="left:478px;top:214px">吴若山</div>
<div class="cell" style="left:558px;top:214px"></div>
<div class="cell" style="left:638px;top:214px">周玉婷</div>
<div class="cell" style="left:718px;top:214px">刘一尚</div>
<div class="cell" style="left:478px;top:238px">苏羽</div>
<div class="cell" style="left:558px;top:238px"></div>
<div class="cell" style="left:638px;top:238px">邱哲强</div>
<div class="cell" style="left:718px;top:238px">王书安</div>
<div class="cell" style="left:478px;top:262px">王小源</div>
<div class="cell" style="left:558px;top:262px"></div>
<div class="cell" style="left:638px;top:262px">孙莹</div>
<div class="cell" style="left:718px;top:262px"></div>
<div class="cell" style="left:478px;top:286px">孙浩东</div>
<div class="cell" style="left:558px;top:286px"></div>
<div class="cell" style="left:638px;top:286px"></div>
<div class="cell" style="left:718px;top:286px"></div>
</div>
<div id="rowhdr">
<div class="rh" style="top:0px;height:24px;line-height:25px">1</div>
<div class="rh" style="top:24px;height:24px;line-height:25px">2</div>
<div class="rh" style="top:48px;height:24px;line-height:25px">3</div>
<div class="rh" style="top:72px;height:24px;line-height:25px">4</div>
<div class="rh" style="top:96px;height:24px;line-height:25px">5</div>
<div class="rh" style="top:120px;height:24px;line-height:25px">6</div>
<div class="rh" style="top:144px;height:24px;line-height:25px">7</div>
<div class="rh" style="top:168px;height:24px;line-height:25px">8</div>
<div class="rh" style="top:192px;height:24px;line-height:25px">9</div>
<div class="rh" style="top:216px;height:24px;line-height:25px">10</div>
<div class="rh" style="top:240px;height:24px;line-height:25px">11</div>
<div class="rh" style="top:264px;height:24px;line-height:25px">12</div>
<div class="rh" style="top:288px;height:24px;line-height:25px">13</div>
<div class="rh" style="top:312px;height:23px;line-height:24px">14</div>
<div class="rh" style="top:335px;height:23px;line-height:24px">15</div>
<div class="rh" style="top:358px;height:23px;line-height:24px">16</div>
<div class="rh" style="top:381px;height:23px;line-height:24px">17</div>
<div class="rh" style="top:404px;height:23px;line-height:24px">18</div>
<div class="rh" style="top:427px;height:23px;line-height:24px">19</div>
<div class="rh" style="top:450px;height:23px;line-height:24px">20</div>
<div class="rh" style="top:473px;height:23px;line-height:24px">21</div>
<div class="rh" style="top:496px;height:23px;line-height:24px">22</div>
</div>
</div>
<!-- vertical scrollbar -->
<div class="abs" style="left:1064px;top:242px;width:19px;height:510px;background:#5b5b5b"></div>
<div class="abs sbtn" style="left:1064px;top:242px;width:19px;height:19px"></div>
<svg class="abs" style="left:1069px;top:248px" width="10" height="6" viewBox="0 0 10 6"><path d="M0.2 5.6H9.4L4.8 0.4Z" fill="#333"/></svg>
<div class="abs sbtn dots" style="left:1064px;top:262px;width:19px;height:447px"></div>
<div class="abs sbtn" style="left:1064px;top:734px;width:19px;height:18px"></div>
<svg class="abs" style="left:1069px;top:740px" width="10" height="6" viewBox="0 0 10 6"><path d="M0.2 0.4H9.4L4.8 5.6Z" fill="#333"/></svg>
<!-- horizontal scrollbar -->
<div class="abs" style="left:648px;top:759px;width:3px;height:3px;background:#f0f0f0"></div>
<div class="abs" style="left:648px;top:764px;width:3px;height:3px;background:#f0f0f0"></div>
<div class="abs" style="left:648px;top:769px;width:3px;height:3px;background:#f0f0f0"></div>
<div class="abs" style="left:667px;top:757px;width:394px;height:18px;background:#5b5b5b"></div>
<div class="abs sbtn" style="left:667px;top:757px;width:18px;height:18px"></div>
<svg class="abs" style="left:672px;top:761px" width="6" height="10" viewBox="0 0 6 10"><path d="M5.6 0.2V9.4L0.4 4.8Z" fill="#333"/></svg>
<div class="abs sbtn dots" style="left:686px;top:757px;width:326px;height:18px"></div>
<div class="abs sbtn" style="left:1042px;top:757px;width:19px;height:18px"></div>
<svg class="abs" style="left:1049px;top:761px" width="6" height="10" viewBox="0 0 6 10"><path d="M0.4 0.2V9.4L5.6 4.8Z" fill="#333"/></svg>
<!-- sheet tabs -->
<svg class="abs" style="left:26px;top:761px" width="7" height="10" viewBox="0 0 7 10"><path d="M6 0.3V9.5L0.6 4.9Z" fill="#9c9c9c"/></svg>
<svg class="abs" style="left:54px;top:761px" width="7" height="10" viewBox="0 0 7 10"><path d="M1 0.3V9.5L6.4 4.9Z" fill="#9c9c9c"/></svg>
<div class="abs" style="left:99px;top:751px;width:82px;height:25px;background:#fff;border-bottom:2px solid #217346;box-sizing:border-box"></div>
<div class="t" style="left:112px;top:750px;font-size:17px;line-height:22px;color:#217346">Sheet1</div>
<svg class="abs" style="left:212px;top:755px" width="22" height="22" viewBox="0 0 22 22"><circle cx="11" cy="11" r="9.4" fill="none" stroke="#f4f4f4" stroke-width="1.7"/><path d="M6 11H16M11 6V16" stroke="#f4f4f4" stroke-width="2"/></svg>
<!-- status bar -->
<div class="abs" style="left:1px;top:779px;width:1085px;height:1px;background:#4c4c4c"></div>
<div class="abs dots2" style="left:1px;top:780px;width:1085px;height:25px;"></div>
<div class="t" style="left:7px;top:782px;color:#f4f4f4">就绪</div>
<svg class="abs" style="left:57px;top:784px" width="16" height="16" viewBox="0 0 16 16"><rect x="2.5" y="2.5" width="12" height="12.5" fill="none" stroke="#f0f0f0" stroke-width="1.3"/><rect x="2.5" y="2.5" width="12" height="3" fill="#f0f0f0"/><path d="M5 8.2H12.4M5 10.4H12.4M5 12.6H12.4" stroke="#f0f0f0" stroke-width="1.1" stroke-dasharray="1.4 1"/><circle cx="3.2" cy="3.2" r="2.8" fill="#dcdcdc"/></svg>
<div class="abs" style="left:727px;top:780px;width:41px;height:25px;background:#454545"></div>
<svg class="abs" style="left:740px;top:785px" width="14" height="13" viewBox="0 0 14 13"><rect x="0.6" y="0.6" width="12.4" height="11.6" fill="none" stroke="#f4f4f4" stroke-width="1.2"/><path d="M4.8 0.6V12.2M8.9 0.6V12.2M0.6 4.5H13M0.6 8.4H13" stroke="#f4f4f4" stroke-width="1.1"/></svg>
<svg class="abs" style="left:781px;top:785px" width="15" height="14" viewBox="0 0 15 14"><rect x="0.6" y="0.6" width="13.4" height="12.4" fill="none" stroke="#f4f4f4" stroke-width="1.2"/><rect x="3.6" y="3" width="7.4" height="8" fill="none" stroke="#f4f4f4" stroke-width="1"/><path d="M5 5.4H9.6M5 7.2H9.6M5 9H9.6" stroke="#f4f4f4" stroke-width="0.9"/></svg>
<svg class="abs" style="left:822px;top:785px" width="15" height="14" viewBox="0 0 15 14"><rect x="0.6" y="0.6" width="13.4" height="12.4" fill="none" stroke="#f4f4f4" stroke-width="1.2"/><rect x="1" y="1" width="7" height="6.6" fill="#f4f4f4"/><path d="M4.6 1V7" stroke="#666" stroke-width="1"/></svg>
<div class="abs" style="left:855px;top:791px;width:9px;height:2px;background:#f4f4f4"></div>
<div class="abs" style="left:869px;top:792px;width:125px;height:1px;background:#e6e6e6"></div>
<div class="abs" style="left:929px;top:785px;width:4px;height:14px;background:#f4f4f4"></div>
<div class="abs" style="left:998px;top:791px;width:11px;height:2px;background:#f4f4f4"></div>
<div class="abs" style="left:1002.5px;top:787px;width:2px;height:11px;background:#f4f4f4"></div>
<div class="t" style="left:1026px;top:782px;color:#f4f4f4;font-size:15px">100%</div>
<div class="abs" style="left:1087px;top:689px;width:1px;height:12px;background:#6ccf62"></div><div class="abs" style="left:1087px;top:704px;width:1px;height:71px;background:#6ccf62"></div><div class="abs" style="left:1087px;top:780px;width:1px;height:11px;background:#6ccf62"></div><div class="abs" style="left:1087px;top:793px;width:1px;height:12px;background:#6ccf62"></div>
</div>
</body>
</html>
